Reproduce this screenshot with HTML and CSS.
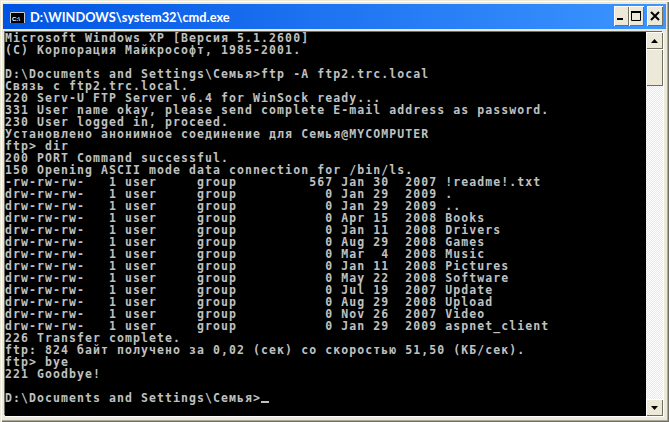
FILE: index.html
```html
<!DOCTYPE html>
<html lang="ru">
<head>
<meta charset="utf-8">
<title>cmd.exe</title>
<link rel="stylesheet" href="styles.css">
</head>
<body>
<div class="window">
  <div class="titlebar">
    <svg class="app-icon" width="16" height="12" viewBox="0 0 16 12">
      <rect x="0" y="0" width="15" height="11" fill="#000"/>
      <path d="M0.5 11V0.5H14.5V11" fill="none" stroke="#c8c8c8"/>
      <text x="2" y="8.5" class="icon-text">C:\</text>
    </svg>
    <span class="title">D:\WINDOWS\system32\cmd.exe</span>
    <div class="caption-buttons">
      <div class="cap-btn"><svg width="15" height="20" viewBox="0 0 15 20"><rect x="3" y="12" width="6" height="2" fill="#000"/></svg></div>
      <div class="cap-btn"><svg width="15" height="20" viewBox="0 0 15 20"><path d="M2.5 5.5h9v9h-9z" fill="none" stroke="#000"/><rect x="2" y="5" width="10" height="2" fill="#000"/></svg></div>
      <div class="cap-btn cap-close"><svg width="16" height="20" viewBox="0 0 16 20"><path d="M4 6l8 8M12 6l-8 8" stroke="#000" stroke-width="2" fill="none"/></svg></div>
    </div>
  </div>
  <div class="client">
<pre class="console">Microsoft Windows XP [Версия 5.1.2600]
(C) Корпорация Майкрософт, 1985-2001.

D:\Documents and Settings\Семья&gt;ftp -A ftp2.trc.local
Связь с ftp2.trc.local.
220 Serv-U FTP Server v6.4 for WinSock ready...
331 User name okay, please send complete E-mail address as password.
230 User logged in, proceed.
Установлено анонимное соединение для Семья@MYCOMPUTER
ftp&gt; dir
200 PORT Command successful.
150 Opening ASCII mode data connection for /bin/ls.
-rw-rw-rw-   1 user     group         567 Jan 30  2007 !readme!.txt
drw-rw-rw-   1 user     group           0 Jan 29  2009 .
drw-rw-rw-   1 user     group           0 Jan 29  2009 ..
drw-rw-rw-   1 user     group           0 Apr 15  2008 Books
drw-rw-rw-   1 user     group           0 Jan 11  2008 Drivers
drw-rw-rw-   1 user     group           0 Aug 29  2008 Games
drw-rw-rw-   1 user     group           0 Mar  4  2008 Music
drw-rw-rw-   1 user     group           0 Jan 11  2008 Pictures
drw-rw-rw-   1 user     group           0 May 22  2008 Software
drw-rw-rw-   1 user     group           0 Jul 19  2007 Update
drw-rw-rw-   1 user     group           0 Aug 29  2008 Upload
drw-rw-rw-   1 user     group           0 Nov 26  2007 Video
drw-rw-rw-   1 user     group           0 Jan 29  2009 aspnet_client
226 Transfer complete.
ftp: 824 байт получено за 0,02 (сек) со скоростью 51,50 (КБ/сек).
ftp&gt; bye
221 Goodbye!

D:\Documents and Settings\Семья&gt;<span class="cursor"></span></pre>
    <div class="scrollbar">
      <div class="sb-btn"><svg width="7" height="4" viewBox="0 0 7 4"><path d="M3.5 0L7 4H0z" fill="#000"/></svg></div>
      <div class="sb-thumb"></div>
      <div class="sb-track"></div>
      <div class="sb-btn"><svg width="7" height="4" viewBox="0 0 7 4"><path d="M0 0h7L3.5 4z" fill="#000"/></svg></div>
    </div>
  </div>
</div>
</body>
</html>
```
FILE: styles.css
```css
html, body { margin: 0; padding: 0; background: #ece9d8; }
.window { width: 669px; height: 422px; box-sizing: border-box; display: flex; flex-direction: column; overflow: hidden; padding: 4px 3px 3px 3px; background: #ece9d8;
  box-shadow: inset 1px 1px 0 #ece9d8, inset 2px 2px 0 #fff, inset -1px -1px 0 #716f64, inset -2px -2px 0 #aca899; }
.titlebar { height: 25px; flex: none; display: flex; align-items: center; padding: 0 3px 0 7px; box-sizing: border-box;
  background: linear-gradient(90deg, #0054e3, #3d95ff); }
.app-icon { flex: none; margin-right: 4px; margin-top: 2px; }
.icon-text { fill: #fff; font: 700 6px "Liberation Sans", sans-serif; }
.title { color: #fff; font: 700 12.8px Lato, sans-serif; white-space: nowrap; flex: 1; }
.caption-buttons { display: flex; flex: none; align-self: flex-start; margin-top: 2px; }
.cap-btn { width: 15px; height: 20px; background: #ece9d8; box-shadow: inset 1px 1px 0 #fff, inset -1px -1px 0 #716f64; }
.cap-close { margin-left: 3px; width: 16px; }
.client { flex: none; display: flex; height: 384px; margin: 3px 3px 0 2px; box-shadow: -1px -1px 0 #716f64, 1px 1px 0 #fff; }
.console { flex: none; width: 641px; height: 384px; margin: 0; background: #000; color: #c0c0c0; overflow: hidden;
  font: 700 11.5px/12px "DejaVu Sans Mono", monospace; letter-spacing: 1.08px; }
.cursor { display: inline-block; width: 8px; height: 2px; background: #c0c0c0; vertical-align: -1px; }
.scrollbar { flex: none; width: 17px; display: flex; flex-direction: column; }
.sb-btn { flex: none; height: 17px; display: flex; align-items: center; justify-content: center; background: #ece9d8; box-shadow: inset 1px 1px 0 #fff, inset -1px -1px 0 #716f64; }
.sb-thumb { flex: none; height: 37px; background: #ece9d8; box-shadow: inset 1px 1px 0 #fff, inset -1px -1px 0 #716f64; }
.sb-track { flex: 1; background: repeating-conic-gradient(#ece9d8 0 25%, #fff 0 50%) 0 0 / 2px 2px; }
```
